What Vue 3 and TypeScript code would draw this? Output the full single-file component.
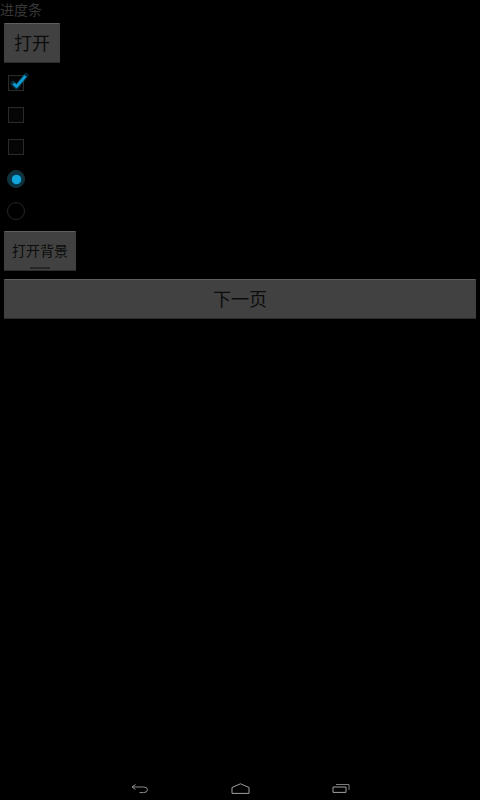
<script setup lang="ts">
const checks: boolean[] = [true, false, false]
const radios: boolean[] = [true, false]
</script>

<template>
  <div class="screen">
    <div class="label">进度条</div>
    <button class="btn open">打开</button>
    <div v-for="(c, i) in checks" :key="'c' + i" class="row">
      <span class="box">
        <svg v-if="c" class="tick" width="22" height="20" viewBox="0 0 22 20">
          <path d="M6 11.5 L9.5 15 L19 3.5" fill="none" stroke="#0e7fa8" stroke-opacity="0.35" stroke-width="5" stroke-linecap="round" stroke-linejoin="round" />
          <path d="M6.5 11.5 L9.5 14.5 L18.5 4" fill="none" stroke="#0f9bd0" stroke-width="2.7" stroke-linejoin="round" />
        </svg>
      </span>
    </div>
    <div v-for="(r, i) in radios" :key="'r' + i" class="row">
      <span class="radio" :class="{ on: r }"><span v-if="r" class="dot"></span></span>
    </div>
    <button class="btn toggle">打开背景<span class="bar"></span></button>
    <button class="btn next">下一页</button>
    <nav class="nav">
      <svg class="back" width="18" height="11" viewBox="0 0 18 11">
        <path d="M4.5 0.5 L1 3 L4.5 5.5 M1 3 H12.5 Q16.5 3 16.5 5.8 Q16.5 8.6 12.5 8.6 H8.5" fill="none" stroke="#8e8e8e" stroke-width="1" />
      </svg>
      <svg class="home" width="19" height="11" viewBox="0 0 19 11">
        <path d="M1 4.5 L9.5 0.8 L18 4.5 V10.4 H1 Z" fill="none" stroke="#a0a0a0" stroke-width="1" />
      </svg>
      <svg class="recent" width="18" height="10" viewBox="0 0 18 10">
        <path d="M1 4 H14 V9.4 H1 Z" fill="none" stroke="#a0a0a0" stroke-width="1" />
        <path d="M4 1.5 H17 V7" fill="none" stroke="#7c7c7c" stroke-width="1" />
      </svg>
    </nav>
  </div>
</template>

<style scoped>
.screen {
  width: 480px;
  height: 800px;
  background: #000;
  display: flex;
  flex-direction: column;
  font-family: "Roboto", "Noto Sans CJK SC", sans-serif;
  overflow: hidden;
}
.label {
  height: 19px;
  line-height: 20px;
  font-size: 14px;
  color: #383838;
}
.btn {
  display: block;
  position: relative;
  box-sizing: border-box;
  height: 40px;
  margin: 4px 4px 0;
  padding: 2px 0 0;
  border: 0;
  border-top: 1px solid #5e5e5e;
  border-bottom: 1px solid #2e2e2e;
  border-radius: 1px;
  background: #414141;
  color: #0c0c0c;
  font-family: inherit;
  font-size: 18px;
  line-height: 36px;
}
.open {
  width: 56px;
  margin-bottom: 4px;
}
.toggle {
  width: 72px;
  padding-top: 0;
  font-size: 14px;
}
.next {
  width: 472px;
  margin-top: 8px;
}
.bar {
  position: absolute;
  left: 26px;
  bottom: 1px;
  width: 20px;
  height: 2px;
  background: #262626;
}
.row {
  height: 32px;
  padding-left: 8px;
  display: flex;
  align-items: center;
}
.box {
  position: relative;
  box-sizing: border-box;
  width: 16px;
  height: 16px;
  border: 1px solid #2a2a2a;
  background: #050505;
}
.tick {
  position: absolute;
  left: -2px;
  top: -4px;
}
.radio {
  box-sizing: border-box;
  width: 18px;
  height: 18px;
  margin-left: -1px;
  border: 1px solid #262626;
  border-radius: 50%;
  display: flex;
  align-items: center;
  justify-content: center;
}
.radio.on {
  background: #0b3443;
  border-color: #1d3036;
}
.dot {
  width: 9px;
  height: 9px;
  border-radius: 50%;
  background: #12a5dc;
  box-shadow: 0 0 1px #12a5dc;
}
.nav {
  margin-top: auto;
  height: 48px;
  position: relative;
  flex: none;
}
.nav svg {
  position: absolute;
}
.back {
  left: 131px;
  top: 31.5px;
}
.home {
  left: 230.5px;
  top: 30.5px;
}
.recent {
  left: 332px;
  top: 30.5px;
}
</style>
